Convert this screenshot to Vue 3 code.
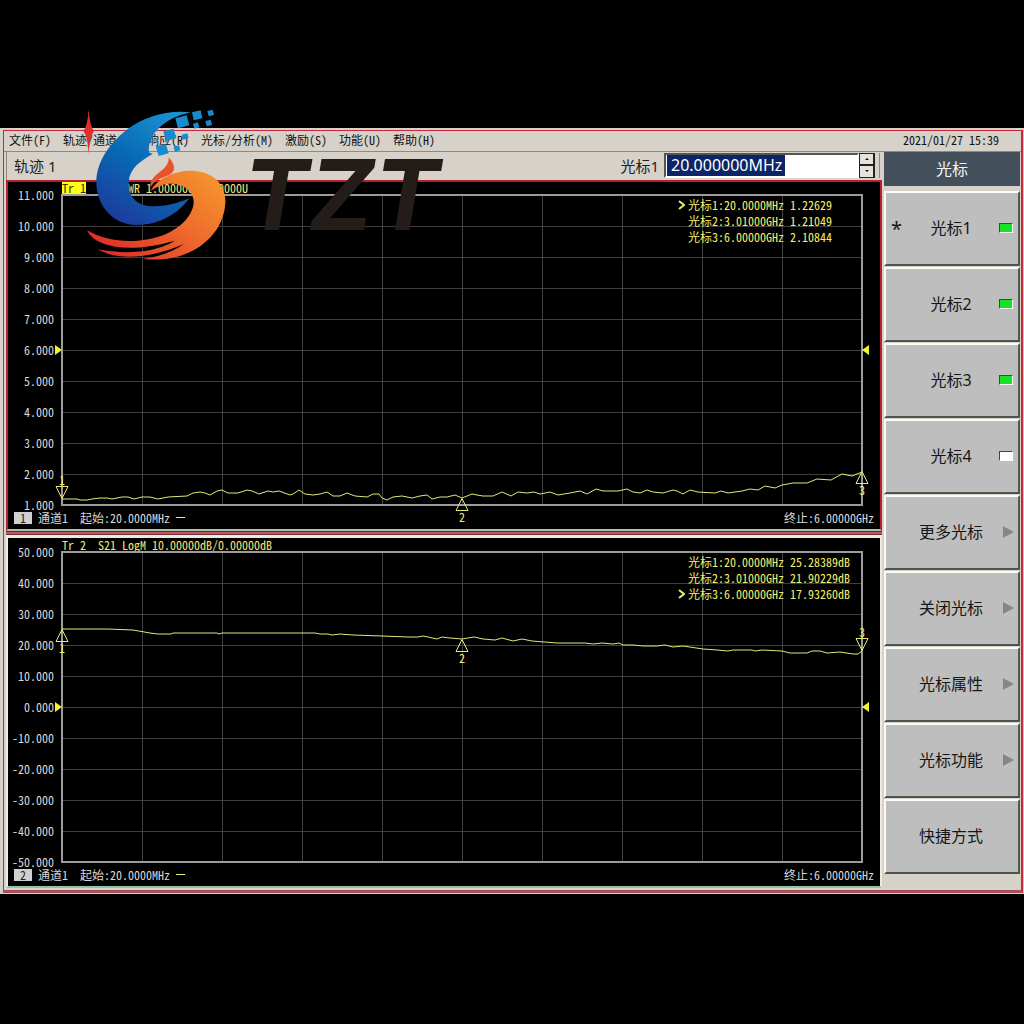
<script setup>
import { ref } from 'vue'

const menus = [
  ['文件', 'F'],
  ['轨迹/通道', 'T'],
  ['响应', 'R'],
  ['光标/分析', 'M'],
  ['激励', 'S'],
  ['功能', 'U'],
  ['帮助', 'H'],
]

const frequency = ref('20.000000MHz')

const softkeys = [
  { label: '光标1', lamp: 'on', current: true },
  { label: '光标2', lamp: 'on' },
  { label: '光标3', lamp: 'on' },
  { label: '光标4', lamp: 'off' },
  { label: '更多光标', more: true },
  { label: '关闭光标', more: true },
  { label: '光标属性', more: true },
  { label: '光标功能', more: true },
  { label: '快捷方式' },
]

const channels = [
  {
    id: 1,
    badge: 'Tr 1',
    title: '  S11 SWR 1.00000U/1.00000U',
    scale: ['11.000', '10.000', '9.000', '8.000', '7.000', '6.000', '5.000', '4.000', '3.000', '2.000', '1.000'],
    viewBox: '62 195 800 310',
    points:
      '62,499 77,499 80,500 87,500 92,499 100,498 107,498 112,499 122,497 128,497 134,499 142,497 150,497 158,499 168,497 187,496 193,493 200,492 205,493 210,495 217,491 222,490 228,493 238,493 247,490 252,491 259,494 268,491 273,492 279,491 290,495 293,494 299,490 305,494 313,495 320,494 327,492 333,496 340,496 347,493 355,496 367,497 373,494 379,494 382,498 387,500 393,497 402,496 412,498 420,496 427,495 432,499 440,497 447,497 455,495 462,498 472,494 477,495 483,496 493,496 502,492 511,496 518,492 527,493 534,492 540,494 550,492 558,495 570,493 580,491 587,494 596,489 603,491 618,491 627,489 633,492 640,493 647,490 653,492 663,493 673,490 677,491 683,494 690,490 698,492 715,493 721,491 728,493 742,491 750,489 758,490 765,486 775,488 782,485 793,483 807,483 817,479 831,480 842,474 852,476 862,472',
    markers: [
      { n: 1, x: 0, y: 304, down: true },
      { n: 2, x: 50, y: 303 },
      { n: 3, x: 100, y: 276 },
    ],
    readout: [
      { n: 1, text: '20.0000MHz 1.22629', active: true },
      { n: 2, text: '3.01000GHz 1.21049' },
      { n: 3, text: '6.00000GHz 2.10844' },
    ],
  },
  {
    id: 2,
    title: 'Tr 2  S21 LogM 10.00000dB/0.00000dB',
    scale: ['50.000', '40.000', '30.000', '20.000', '10.000', '0.000', '-10.000', '-20.000', '-30.000', '-40.000', '-50.000'],
    viewBox: '62 552 800 310',
    points:
      '62,629 107,629 133,630 150,633 158,634 171,634 173,633 217,633 219,634 222,633 315,633 320,634 328,634 332,635 340,634 353,635 382,636 408,637 418,637 423,636 428,637 437,639 442,637 450,638 462,639 474,637 483,639 495,640 502,638 513,641 522,639 532,641 557,643 585,643 593,644 602,643 613,644 619,643 623,645 633,645 643,646 650,646 657,646 665,645 673,647 683,646 703,649 717,650 728,651 733,650 752,650 755,651 762,650 782,651 790,653 807,653 812,651 820,651 827,653 840,652 853,654 858,654 862,651',
    markers: [
      { n: 1, x: 0, y: 77 },
      { n: 2, x: 50, y: 87 },
      { n: 3, x: 100, y: 99, down: true },
    ],
    readout: [
      { n: 1, text: '20.0000MHz 25.28389dB' },
      { n: 2, text: '3.01000GHz 21.90229dB' },
      { n: 3, text: '6.00000GHz 17.93260dB', active: true },
    ],
  },
]

const inner = [1, 2, 3, 4, 5, 6, 7, 8, 9]
const originX = (c) => Number(c.viewBox.split(' ')[0])
const originY = (c) => Number(c.viewBox.split(' ')[1])
</script>

<template>
  <div class="stage">
    <div class="window">
      <div class="bezel">
        <header class="menubar">
          <nav class="menus">
            <button v-for="m in menus" :key="m[1]" type="button" class="menu">{{ m[0] }}({{ m[1] }})</button>
          </nav>
          <time class="clock" datetime="2021-01-27T15:39">2021/01/27 15:39</time>
        </header>

        <div class="body">
          <main class="main">
            <div class="toolbar">
              <span class="trace-name">轨迹 1</span>
              <label class="entry-label" for="marker-frequency">光标1</label>
              <input id="marker-frequency" v-model="frequency" class="entry" type="text" />
              <div class="spinner">
                <button type="button" class="spin" aria-label="增加"><i class="tri up"></i></button>
                <button type="button" class="spin" aria-label="减少"><i class="tri down"></i></button>
              </div>
              <i class="grip"></i>
            </div>

            <template v-for="c in channels" :key="c.id">
              <div v-if="c.id === 2" class="divider"></div>
              <section class="channel" :class="{ active: c.id === 1 }">
                <div class="trace-title"><span v-if="c.badge" class="trace-badge">{{ c.badge }}</span>{{ c.title }}</div>
                <div class="chart">
                  <div class="scale">
                    <span v-for="s in c.scale" :key="s" class="tick">{{ s }}</span>
                  </div>
                  <div class="plot">
                    <svg class="graph" :viewBox="c.viewBox" preserveAspectRatio="none">
                      <g class="grid">
                        <line v-for="i in inner" :key="'v' + i" :x1="originX(c) + i * 80" :x2="originX(c) + i * 80" :y1="originY(c)" :y2="originY(c) + 310" />
                        <line v-for="i in inner" :key="'h' + i" :x1="originX(c)" :x2="originX(c) + 800" :y1="originY(c) + i * 31" :y2="originY(c) + i * 31" />
                      </g>
                      <rect class="frame" :x="originX(c)" :y="originY(c)" width="800" height="310" />
                      <polyline class="trace" :points="c.points" />
                    </svg>
                    <i class="level left"></i>
                    <i class="level right"></i>
                    <div
                      v-for="m in c.markers"
                      :key="m.n"
                      class="marker"
                      :class="{ inverted: m.down }"
                      :style="{ left: m.x + '%', top: m.y + 'px' }"
                    >
                      <svg class="pointer" width="14" height="13" viewBox="0 0 14 13">
                        <path :d="m.down ? 'M1 .5H13L7 12.5Z' : 'M1 12.5H13L7 .5Z'" />
                      </svg>
                      <span class="marker-no">{{ m.n }}</span>
                    </div>
                    <div class="readout">
                      <div v-for="r in c.readout" :key="r.n" class="reading">
                        <svg v-if="r.active" class="chevron" width="7" height="10" viewBox="0 0 7 10"><path d="M1 1L6 5L1 9" /></svg>
                        光标{{ r.n }}:{{ r.text }}
                      </div>
                    </div>
                  </div>
                </div>
                <footer class="status">
                  <span class="channel-no">{{ c.id }}</span>
                  <span class="channel-name">通道1</span>
                  <span>起始:20.0000MHz</span>
                  <i class="dash"></i>
                  <span class="stop">终止:6.00000GHz</span>
                </footer>
              </section>
            </template>
          </main>

          <aside class="side">
            <h1 class="side-title">光标</h1>
            <div class="keys">
              <button v-for="k in softkeys" :key="k.label" type="button" class="key">
                <span v-if="k.current" class="star">*</span>
                <span>{{ k.label }}</span>
                <i v-if="k.lamp" class="lamp" :class="k.lamp"></i>
                <i v-if="k.more" class="more"></i>
              </button>
            </div>
          </aside>
        </div>
      </div>
    </div>

    <svg class="logo" width="460" height="170" viewBox="0 0 1380 510" role="img" aria-label="TZT">
      <defs>
        <linearGradient id="blue" x1="0.8" y1="0" x2="0.3" y2="1">
          <stop offset="0" stop-color="#1a92d2" />
          <stop offset="0.5" stop-color="#0868b4" />
          <stop offset="1" stop-color="#1c3c9c" />
        </linearGradient>
        <linearGradient id="fire" x1="1" y1="0.2" x2="0.1" y2="0.9">
          <stop offset="0" stop-color="#f5922c" />
          <stop offset="0.45" stop-color="#ee6a2c" />
          <stop offset="1" stop-color="#e02a28" />
        </linearGradient>
      </defs>
      <path fill="#e0302a" d="M266 28Q269 78 282 93Q269 110 266 162Q263 110 250 93Q263 78 266 28Z" />
      <path fill="url(#blue)" d="M572 37C505 28 432 50 382 88C318 138 288 196 289 250C291 322 342 374 408 375C482 376 538 337 568 295C530 312 484 322 444 318C402 312 384 282 386 246C389 207 418 184 458 162L447 157C443 112 480 58 572 37Z" />
      <g fill="#178bd0">
        <path d="M526 55L560 46L568 76L534 85Z" />
        <path d="M576 37L602 31L607 55L581 61Z" />
        <path d="M622 33L638 29L642 45L626 49Z" />
        <path d="M579 71L594 67L598 82L583 86Z" />
        <path d="M616 63L632 59L636 75L620 79Z" />
        <path d="M490 94L521 86L529 115L498 123Z" />
        <path d="M545 104L562 100L566 114L549 119Z" />
        <path d="M467 139L498 133L506 160L476 168Z" />
        <path d="M521 140L537 136L541 151L525 155Z" />
      </g>
      <path fill="#e9522c" d="M452 262C444 222 510 214 506 172C532 202 526 221 494 230C474 237 460 246 452 262Z" />
      <path fill="url(#fire)" d="M452 273C474 232 534 208 586 213C645 219 679 258 676 309C671 392 607 450 532 470C496 480 460 480 428 477C477 470 518 456 552 432C498 456 440 469 391 470C349 470 317 463 293 448C340 457 391 459 435 453C473 446 500 437 524 422C460 441 395 448 345 440C302 433 273 416 261 391C304 417 358 426 414 422C500 415 563 374 579 321C589 283 561 257 525 252C499 249 473 257 452 273Z" />
      <text class="wordmark" x="730" y="391">TZT</text>
    </svg>
  </div>
</template>

<style>
body {
  margin: 0;
  background: #000;
}
</style>

<style scoped>
.stage {
  position: relative;
  box-sizing: border-box;
  min-height: 100vh;
  padding: 128px 0;
  background: #000;
  font-family: "Noto Sans", "Noto Sans CJK SC", sans-serif;
}
.menubar, .channel {
  font: 12px/12px "Noto Sans Mono CJK SC", "Liberation Mono", "Noto Sans CJK SC", monospace;
}
.window {
  padding: 2px 1px 1px 3px;
  background: #d6d2ca;
}
.bezel {
  border: 1px solid #c82838;
  border-right-width: 2px;
  border-bottom: 3px solid #a85058;
}
button {
  margin: 0;
  padding: 0;
  font: inherit;
  color: inherit;
}
.menubar {
  display: flex;
  box-sizing: border-box;
  justify-content: space-between;
  align-items: center;
  height: 21px;
  padding: 0 22px 2px 5px;
  border-bottom: 1px solid #8c8a84;
  color: #111;
}
.menus {
  display: flex;
  gap: 12px;
}
.menu {
  border: 0;
  background: none;
  white-space: nowrap;
}
.body {
  display: flex;
  padding-bottom: 2px;
}
.main {
  flex: 1;
  min-width: 0;
  padding-left: 2px;
}
.toolbar {
  display: flex;
  box-sizing: border-box;
  align-items: center;
  height: 28px;
  padding: 0 0 2px 7px;
  border-left: 1px solid #8c8a84;
  font-size: 15px;
  color: #222;
}
.entry-label {
  margin-left: auto;
  margin-right: 5px;
}
.entry {
  box-sizing: border-box;
  width: 195px;
  height: 25px;
  padding: 0 0 0 5px;
  border: 2px solid #fff;
  border-top-color: #555;
  border-left-color: #555;
  border-radius: 0;
  outline: 0;
  background: linear-gradient(#0c2468, #0c2468) 1px 0 / 118px 100% no-repeat #fff;
  font: 16px/21px "Noto Sans", sans-serif;
  color: #fff;
}
.spinner {
  display: flex;
  flex-direction: column;
  width: 16px;
  height: 25px;
}
.spin {
  display: flex;
  flex: 1;
  align-items: center;
  justify-content: center;
  border: 1px solid #222;
  border-right-width: 2px;
  background: #e4e2dc;
}
.tri {
  border: 2px solid transparent;
}
.tri.up {
  border-top-width: 0;
  border-bottom-color: #111;
}
.tri.down {
  border-bottom-width: 0;
  border-top-color: #111;
}
.grip {
  width: 1px;
  height: 25px;
  margin: 0 2px 0 4px;
  background: #8c8a84;
}
.channel {
  padding-top: 1px;
  border: solid #efeae2;
  border-width: 3px 2px 2px;
  border-bottom-color: #8cc4a8;
  background: #000;
  color: #d8d8d8;
}
.channel.active {
  padding-top: 0;
  border: 2px solid #b82030;
  border-bottom-color: #a8c0ac;
}
.divider {
  height: 4px;
  background: linear-gradient(#5c2830 1px, #c05864 1px 3px, #6c3038 3px);
}
.trace-title {
  height: 12px;
  padding-left: 54px;
  color: #eaea78;
  white-space: pre;
}
.trace-badge {
  display: inline-block;
  height: 12px;
  background: #ffff10;
  color: #333300;
}
.chart {
  display: grid;
  grid-template-columns: 54px 1fr 18px;
  padding: 1px 0;
}
.scale {
  display: flex;
  flex-direction: column;
  justify-content: space-between;
  align-items: flex-end;
  margin: -6px 0;
  padding-right: 8px;
}
.plot {
  position: relative;
  height: 310px;
}
.graph {
  display: block;
  width: 100%;
  height: 100%;
  overflow: visible;
}
.graph * {
  fill: none;
  vector-effect: non-scaling-stroke;
}
.grid line {
  stroke: #404040;
  shape-rendering: crispEdges;
}
.frame {
  stroke: #9c9c9c;
  stroke-width: 2px;
}
.trace {
  stroke: #e6e678;
}
.level {
  position: absolute;
  top: 50%;
  margin-top: -5px;
  border: 5px solid transparent;
}
.level.left {
  right: 100%;
  border-right-width: 0;
  border-left: 7px solid #f4f432;
}
.level.right {
  left: 100%;
  border-left-width: 0;
  border-right: 7px solid #f4f432;
}
.marker {
  position: absolute;
  display: flex;
  flex-direction: column;
  align-items: center;
  width: 14px;
  margin-left: -7px;
  color: #eaea78;
}
.marker.inverted {
  flex-direction: column-reverse;
  transform: translateY(-100%);
}
.pointer, .chevron {
  fill: none;
  stroke: #eaea78;
}
.pointer {
  display: block;
}
.readout {
  position: absolute;
  top: 2px;
  right: 0;
  width: 174px;
  color: #f0f06c;
}
.reading {
  position: relative;
  line-height: 16px;
  white-space: nowrap;
}
.chevron {
  position: absolute;
  top: 3px;
  right: 100%;
  margin-right: 3px;
  stroke-width: 2px;
}
.status {
  display: flex;
  align-items: center;
  height: 23px;
  padding: 0 6px;
}
.channel-no {
  width: 18px;
  background: #d0d0d0;
  color: #222;
  text-align: center;
}
.channel-name {
  margin: 0 12px 0 6px;
}
.dash {
  width: 9px;
  height: 1px;
  margin-left: 6px;
  background: #eaea78;
}
.stop {
  margin-left: auto;
}
.side {
  box-sizing: border-box;
  width: 139px;
  padding: 0 1px 0 2px;
}
.side-title {
  margin: 0 0 5px;
  background: #43505c;
  color: #f4f4f4;
  font-size: 16px;
  font-weight: 400;
  line-height: 34px;
  text-align: center;
}
.keys {
  display: flex;
  flex-direction: column;
  gap: 1px;
}
.key {
  position: relative;
  box-sizing: border-box;
  height: 75px;
  padding: 0 2px 4px 0;
  border: 2px solid #fbfbf4;
  border-right-color: #4c5c50;
  border-bottom-color: #4c5450;
  background: #bebebe;
  color: #161616;
  font-size: 16px;
}
.star {
  position: absolute;
  left: 5px;
  font-size: 20px;
}
.lamp {
  position: absolute;
  top: 30px;
  right: 5px;
  box-sizing: border-box;
  width: 14px;
  height: 10px;
  border: 1px solid #fff;
  border-top-color: #444;
  border-left-color: #444;
  background: #fff;
}
.lamp.on {
  background: #18e028;
}
.more {
  position: absolute;
  top: 29px;
  right: 4px;
  border: 6px solid transparent;
  border-right-width: 0;
  border-left: 11px solid #868686;
}
.logo {
  position: absolute;
  top: 100px;
  left: 0;
  pointer-events: none;
}
.wordmark {
  fill: #231c19;
  font: italic 700 294px Inter, "Liberation Sans", sans-serif;
}
</style>
